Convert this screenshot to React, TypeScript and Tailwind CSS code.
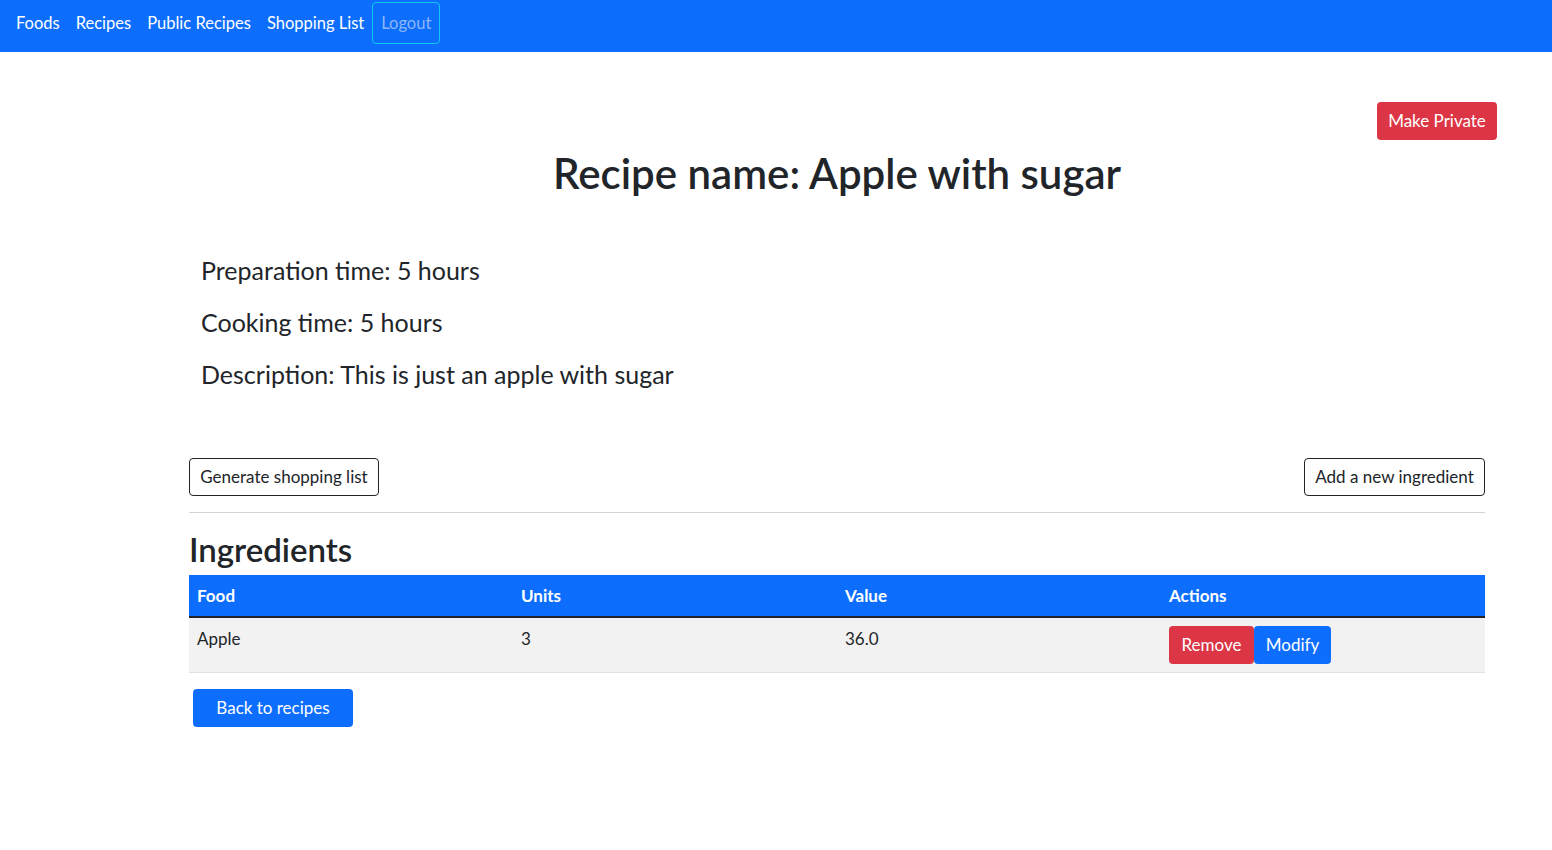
import React from 'react';

const font = { fontFamily: '"Lato", "Noto Sans", sans-serif' };

function NavBar() {
  const links = ['Foods', 'Recipes', 'Public Recipes', 'Shopping List'];
  return (
    <nav className="flex h-[52px] items-start bg-[#0d6efd] pl-2 pt-[2px] text-white">
      {links.map((l) => (
        <a key={l} href="#" className="flex h-[42px] items-center px-2 text-[16.5px]">
          {l}
        </a>
      ))}
      <button className="h-[42px] rounded-[4px] border border-[#0dcaf0] px-2 text-[16.5px] text-[#8cb6f7]">
        Logout
      </button>
    </nav>
  );
}

function App() {
  return (
    <div className="min-h-screen bg-white text-[#212529]" style={font}>
      <NavBar />
      <div className="ml-[189px] w-[1296px]">
        <div className="flex justify-end pt-[50px] -mr-3">
          <button className="h-[38px] w-[120px] rounded-[4px] bg-[#dc3545] text-[17px] text-white">Make Private</button>
        </div>
        <h1 className="mt-[8px] text-center text-[42px] font-semibold leading-[50px]">Recipe name: Apple with sugar</h1>
        <div className="mt-[58px] flex flex-col gap-[23px] px-3 text-[25px] leading-[29px]">
          <p>Preparation time: 5 hours</p>
          <p>Cooking time: 5 hours</p>
          <p>Description: This is just an apple with sugar</p>
        </div>
        <div className="mt-[69px] flex justify-between">
          <button className="h-[38px] w-[190px] rounded-[4px] border border-[#212529] text-[17px]">Generate shopping list</button>
          <button className="h-[38px] w-[181px] rounded-[4px] border border-[#212529] text-[17px]">Add a new ingredient</button>
        </div>
        <hr className="mt-4 border-t border-[#d3d4d5]" />
        <h2 className="mt-[16px] text-[33px] font-semibold leading-[40px]">Ingredients</h2>
        <table className="mt-[6px] w-full table-fixed border-collapse text-left text-[17px]">
          <thead>
            <tr className="h-[42px] border-b-2 border-[#212529] bg-[#0d6efd] text-white">
              <th className="px-2 font-bold">Food</th>
              <th className="px-2 font-bold">Units</th>
              <th className="px-2 font-bold">Value</th>
              <th className="px-2 font-bold">Actions</th>
            </tr>
          </thead>
          <tbody>
            <tr className="h-[55px] border-b border-[#dee2e6] bg-[#f2f2f2] align-top">
              <td className="px-2 pt-[8px]">Apple</td>
              <td className="px-2 pt-[8px]">3</td>
              <td className="px-2 pt-[8px]">36.0</td>
              <td className="px-2 pt-2">
                <div className="flex">
                  <button className="h-[38px] w-[85px] rounded-[4px] bg-[#dc3545] text-white">Remove</button>
                  <button className="h-[38px] w-[77px] rounded-[4px] bg-[#0d6efd] text-white">Modify</button>
                </div>
              </td>
            </tr>
          </tbody>
        </table>
        <button className="ml-1 mt-4 h-[38px] w-[160px] rounded-[4px] bg-[#0d6efd] text-[17px] text-white">Back to recipes</button>
      </div>
    </div>
  );
}

export default App;
